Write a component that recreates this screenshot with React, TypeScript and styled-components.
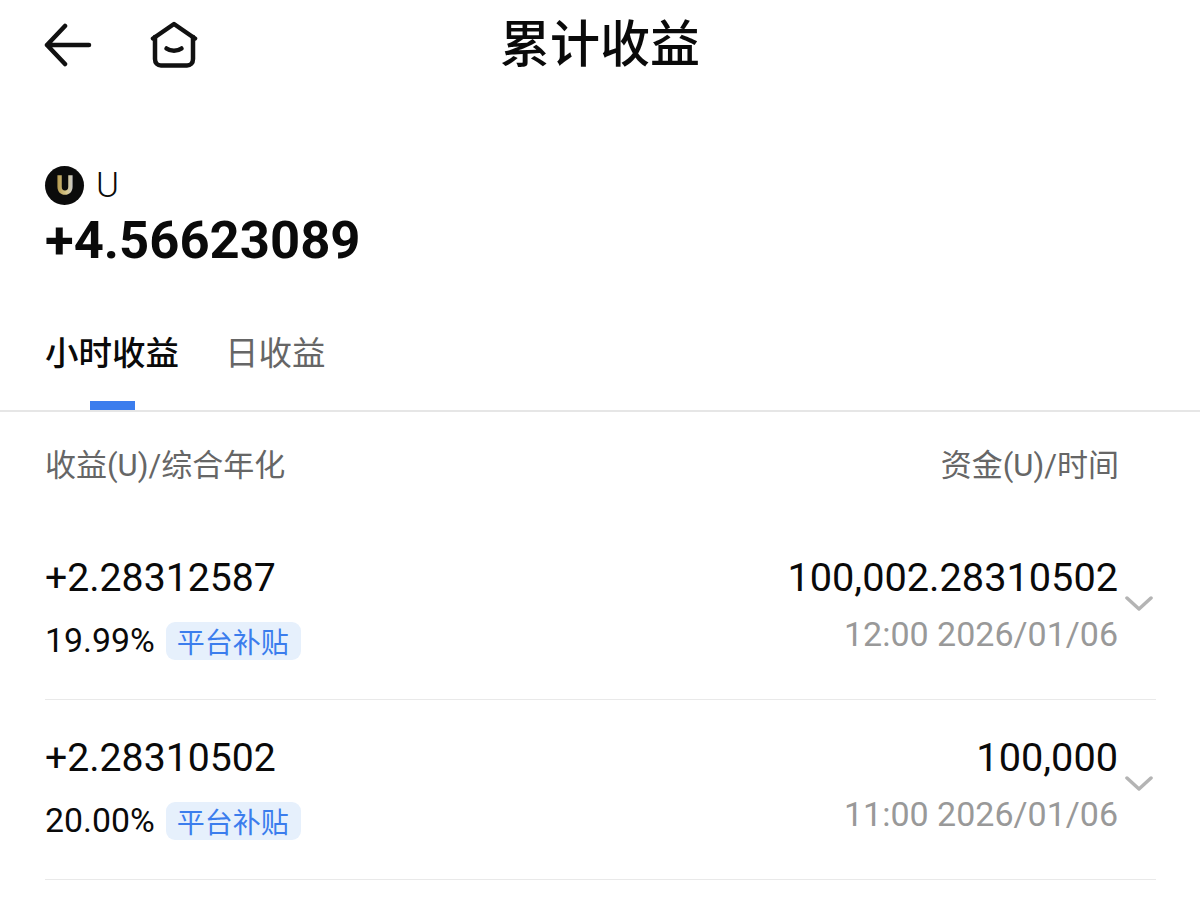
import React from 'react';
import styled, { createGlobalStyle } from 'styled-components';

const GlobalStyle = createGlobalStyle`
  html, body {
    margin: 0;
    padding: 0;
    background: #fff;
  }
  body {
    font-family: Roboto, "Noto Sans CJK SC", sans-serif;
    color: #0a0a0a;
  }
`;

const records = [
  { income: '+2.28312587', rate: '19.99%', funds: '100,002.28310502', time: '12:00 2026/01/06' },
  { income: '+2.28310502', rate: '20.00%', funds: '100,000', time: '11:00 2026/01/06' }
];

const App = () => {
  return (
    <Page>
      <GlobalStyle />
      <Header>
        <HeaderIcons>
          <svg width="48" height="48" viewBox="0 0 48 48" fill="none">
            <path d="M45 24H3M21 5L3 24L21 43" stroke="#111" strokeWidth="4.500" strokeLinecap="round" strokeLinejoin="round" />
          </svg>
          <svg width="48" height="48" viewBox="0 0 48 48" fill="none">
            <path d="M3 17.500L24 3L45 17.500" stroke="#111" strokeWidth="4.500" strokeLinecap="round" strokeLinejoin="round" />
            <path d="M5 16V38C5 42 7.500 44.500 11 44.500H37C40.500 44.500 43 42 43 38V16" stroke="#111" strokeWidth="4.500" strokeLinecap="round" />
            <path d="M16.500 27.500C20.500 30.500 27.500 30.500 31.500 27.500" stroke="#111" strokeWidth="4.500" strokeLinecap="round" />
          </svg>
        </HeaderIcons>
        <Title>累计收益</Title>
      </Header>

      <Summary>
        <CoinRow>
          <Coin>
            <svg width="26" height="26" viewBox="0 0 24 24" fill="none">
              <defs>
                <linearGradient id="coinGold" x1="0" y1="0" x2="1" y2="0">
                  <stop offset="0" stopColor="#b59a50" />
                  <stop offset="0.6" stopColor="#d8c88c" />
                  <stop offset="1" stopColor="#c8c8c8" />
                </linearGradient>
              </defs>
              <path d="M5 3V13.500C5 18 8 21 12 21C16 21 19 18 19 13.500V3H15V13.500C15 15.800 14 17 12 17C10 17 9 15.800 9 13.500V3Z" fill="url(#coinGold)" />
            </svg>
          </Coin>
          <CoinName>U</CoinName>
        </CoinRow>
        <Total>+4.56623089</Total>
      </Summary>

      <Tabs>
        <Tab $active>小时收益</Tab>
        <Tab>日收益</Tab>
      </Tabs>

      <ColumnHeader>
        <span>收益(U)/综合年化</span>
        <span>资金(U)/时间</span>
      </ColumnHeader>

      <List>
        {records.map((item) => (
          <Row key={item.time}>
            <Left>
              <Income>{item.income}</Income>
              <RateRow>
                <Rate>{item.rate}</Rate>
                <Tag>平台补贴</Tag>
              </RateRow>
            </Left>
            <Right>
              <Funds>{item.funds}</Funds>
              <Time>{item.time}</Time>
            </Right>
            <Chevron width="28" height="18" viewBox="0 0 28 18" fill="none">
              <path d="M2 3L14 14L26 3" stroke="#b4b4b4" strokeWidth="3.500" strokeLinecap="round" strokeLinejoin="round" />
            </Chevron>
          </Row>
        ))}
      </List>
    </Page>
  );
};

export default App;

const Page = styled.div`
  width: 1200px;
  height: 902px;
  overflow: hidden;
  background: #fff;
`;

const Header = styled.header`
  position: relative;
  height: 90px;
  display: flex;
  align-items: center;
  justify-content: center;
`;

const HeaderIcons = styled.div`
  position: absolute;
  left: 44px;
  top: 21px;
  display: flex;
  align-items: center;
  gap: 58px;
`;

const Title = styled.h1`
  margin: 0;
  font-size: 50px;
  font-weight: 500;
  line-height: 90px;
`;

const Summary = styled.section`
  padding: 75px 0 0 45px;
`;

const CoinRow = styled.div`
  display: flex;
  align-items: center;
  gap: 12px;
  height: 40px;
`;

const Coin = styled.div`
  width: 39px;
  height: 39px;
  border-radius: 50%;
  background: #0b0b0b;
  display: flex;
  align-items: center;
  justify-content: center;
`;

const CoinName = styled.span`
  font-size: 35px;
  font-weight: 300;
`;

const Total = styled.div`
  font-size: 52.600px;
  font-weight: 700;
  line-height: 64px;
  margin-top: 3px;
`;

const Tabs = styled.nav`
  display: flex;
  gap: 46px;
  height: 140px;
  padding: 0 0 0 45px;
  border-bottom: 2px solid #e6e6e6;
  box-sizing: border-box;
`;

const Tab = styled.div<{ $active?: boolean }>`
  position: relative;
  font-size: 33.500px;
  font-weight: ${(p) => (p.$active ? 500 : 400)};
  line-height: 50px;
  padding-top: 57px;
  color: ${(p) => (p.$active ? '#0a0a0a' : '#666')};

  ${(p) =>
    p.$active &&
    `
    &::after {
      content: '';
      position: absolute;
      left: 45px;
      bottom: 0;
      width: 45px;
      height: 9px;
      background: #3b7ded;
    }
  `}
`;

const ColumnHeader = styled.div`
  display: flex;
  justify-content: space-between;
  padding: 32px 81px 0 45px;
  font-size: 31px;
  line-height: 44px;
  color: #666;
`;

const List = styled.div`
  padding: 0 44px 0 45px;
  margin-top: 32px;
`;

const Row = styled.div`
  position: relative;
  height: 180px;
  box-sizing: border-box;
  display: flex;
  justify-content: space-between;
  padding-top: 32px;
  padding-right: 38px;
  border-bottom: 1px solid #e9e9e9;
`;

const Left = styled.div`
  display: flex;
  flex-direction: column;
`;

const Right = styled.div`
  display: flex;
  flex-direction: column;
  align-items: flex-end;
`;

const Income = styled.div`
  font-size: 39.200px;
  line-height: 52px;
`;

const RateRow = styled.div`
  display: flex;
  align-items: center;
  gap: 11px;
  margin-top: 17px;
`;

const Rate = styled.span`
  font-size: 33.800px;
  line-height: 40px;
`;

const Tag = styled.span`
  display: flex;
  align-items: center;
  height: 38px;
  padding: 0 12px 0 11px;
  border-radius: 9px;
  background: #e6f0fc;
  color: #3b7ded;
  font-size: 28px;
`;

const Funds = styled.div`
  font-size: 39.700px;
  line-height: 52px;
`;

const Time = styled.div`
  font-size: 34px;
  line-height: 40px;
  margin-top: 10px;
  color: #999;
`;

const Chevron = styled.svg`
  position: absolute;
  right: 3px;
  top: 75px;
`;
